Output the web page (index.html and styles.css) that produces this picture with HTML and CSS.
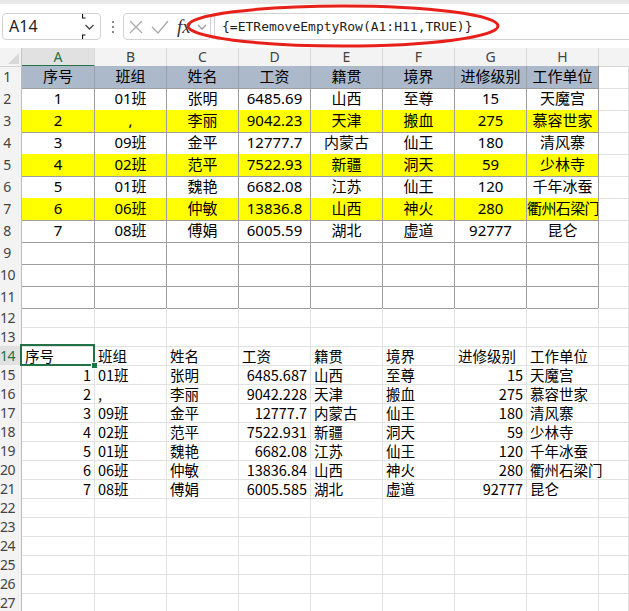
FILE: index.html
```html
<!DOCTYPE html>
<html lang="zh-CN">
<head>
<meta charset="utf-8">
<title>ETRemoveEmptyRow</title>
<link rel="stylesheet" href="styles.css">
</head>
<body>
<div class="topbar">
  <div class="namebox">
    <div class="nb-val">A14</div>
    <div class="nb-dd">
      <svg width="18" height="25" viewBox="0 0 18 25"><path d="M0.5 0v4h3M0.5 25v-4h3" fill="none" stroke="#111" stroke-width="1.2"/><path d="M3.5 11l4 4 4-4" fill="none" stroke="#444" stroke-width="1.3"/></svg>
    </div>
  </div>
  <div class="dots"><i></i><i></i><i></i></div>
  <div class="iconbox">
    <svg class="ic-x" width="14" height="14" viewBox="0 0 14 14"><path d="M1 1l12 12M13 1L1 13" stroke="#a9a9a9" stroke-width="1.3" fill="none"/></svg>
    <svg class="ic-ok" width="18" height="14" viewBox="0 0 18 14"><path d="M1 7l6 6L17 1" stroke="#a9a9a9" stroke-width="1.3" fill="none"/></svg>
    <span class="fx">fx</span>
    <svg class="ic-dd" width="10" height="8" viewBox="0 0 10 8"><path d="M1 2l4 4 4-4" stroke="#9a9a9a" stroke-width="1.3" fill="none"/></svg>
  </div>
  <div class="formula">{=ETRemoveEmptyRow(A1:H11,TRUE)}</div>
  <svg class="ring" width="330" height="52" viewBox="0 0 330 52"><ellipse cx="158" cy="26" rx="155" ry="20" fill="none" stroke="#e8201a" stroke-width="3"/></svg>
</div>

<div class="sheet">
  <div class="row colhdr">
    <div class="corner"></div>
    <div class="ch act">A</div><div class="ch">B</div><div class="ch">C</div><div class="ch">D</div><div class="ch">E</div><div class="ch">F</div><div class="ch">G</div><div class="ch">H</div><div class="ch last"></div>
  </div>

  <div class="row tall hd">
    <div class="rh">1</div>
    <div class="c d">序号</div><div class="c d">班组</div><div class="c d">姓名</div><div class="c d">工资</div><div class="c d">籍贯</div><div class="c d">境界</div><div class="c d">进修级别</div><div class="c d">工作单位</div><div class="c"></div>
  </div>
  <div class="row tall">
    <div class="rh">2</div>
    <div class="c d">1</div><div class="c d">01班</div><div class="c d">张明</div><div class="c d">6485.69</div><div class="c d">山西</div><div class="c d">至尊</div><div class="c d">15</div><div class="c d">天魔宫</div><div class="c"></div>
  </div>
  <div class="row tall yl">
    <div class="rh">3</div>
    <div class="c d">2</div><div class="c d">,</div><div class="c d">李丽</div><div class="c d">9042.23</div><div class="c d">天津</div><div class="c d">搬血</div><div class="c d">275</div><div class="c d">慕容世家</div><div class="c"></div>
  </div>
  <div class="row tall">
    <div class="rh">4</div>
    <div class="c d">3</div><div class="c d">09班</div><div class="c d">金平</div><div class="c d">12777.7</div><div class="c d">内蒙古</div><div class="c d">仙王</div><div class="c d">180</div><div class="c d">清风寨</div><div class="c"></div>
  </div>
  <div class="row tall yl">
    <div class="rh">5</div>
    <div class="c d">4</div><div class="c d">02班</div><div class="c d">范平</div><div class="c d">7522.93</div><div class="c d">新疆</div><div class="c d">洞天</div><div class="c d">59</div><div class="c d">少林寺</div><div class="c"></div>
  </div>
  <div class="row tall">
    <div class="rh">6</div>
    <div class="c d">5</div><div class="c d">01班</div><div class="c d">魏艳</div><div class="c d">6682.08</div><div class="c d">江苏</div><div class="c d">仙王</div><div class="c d">120</div><div class="c d">千年冰蚕</div><div class="c"></div>
  </div>
  <div class="row tall yl">
    <div class="rh">7</div>
    <div class="c d">6</div><div class="c d">06班</div><div class="c d">仲敏</div><div class="c d">13836.8</div><div class="c d">山西</div><div class="c d">神火</div><div class="c d">280</div><div class="c d fit">衢州石梁门</div><div class="c"></div>
  </div>
  <div class="row tall">
    <div class="rh">8</div>
    <div class="c d">7</div><div class="c d">08班</div><div class="c d">傅娟</div><div class="c d">6005.59</div><div class="c d">湖北</div><div class="c d">虚道</div><div class="c d">92777</div><div class="c d">昆仑</div><div class="c"></div>
  </div>
  <div class="row tall">
    <div class="rh">9</div>
    <div class="c d"></div><div class="c d"></div><div class="c d"></div><div class="c d"></div><div class="c d"></div><div class="c d"></div><div class="c d"></div><div class="c d"></div><div class="c"></div>
  </div>
  <div class="row tall">
    <div class="rh">10</div>
    <div class="c d"></div><div class="c d"></div><div class="c d"></div><div class="c d"></div><div class="c d"></div><div class="c d"></div><div class="c d"></div><div class="c d"></div><div class="c"></div>
  </div>
  <div class="row tall">
    <div class="rh">11</div>
    <div class="c d"></div><div class="c d"></div><div class="c d"></div><div class="c d"></div><div class="c d"></div><div class="c d"></div><div class="c d"></div><div class="c d"></div><div class="c"></div>
  </div>

  <div class="row short">
    <div class="rh">12</div>
    <div class="c"></div><div class="c"></div><div class="c"></div><div class="c"></div><div class="c"></div><div class="c"></div><div class="c"></div><div class="c"></div><div class="c"></div>
  </div>
  <div class="row short">
    <div class="rh">13</div>
    <div class="c"></div><div class="c"></div><div class="c"></div><div class="c"></div><div class="c"></div><div class="c"></div><div class="c"></div><div class="c"></div><div class="c"></div>
  </div>
  <div class="row short out">
    <div class="rh act">14</div>
    <div class="c sel">序号</div><div class="c">班组</div><div class="c">姓名</div><div class="c">工资</div><div class="c">籍贯</div><div class="c">境界</div><div class="c">进修级别</div><div class="c">工作单位</div><div class="c"></div>
  </div>
  <div class="row short out">
    <div class="rh">15</div>
    <div class="c n">1</div><div class="c">01班</div><div class="c">张明</div><div class="c n">6485.687</div><div class="c">山西</div><div class="c">至尊</div><div class="c n">15</div><div class="c">天魔宫</div><div class="c"></div>
  </div>
  <div class="row short out">
    <div class="rh">16</div>
    <div class="c n">2</div><div class="c">,</div><div class="c">李丽</div><div class="c n">9042.228</div><div class="c">天津</div><div class="c">搬血</div><div class="c n">275</div><div class="c">慕容世家</div><div class="c"></div>
  </div>
  <div class="row short out">
    <div class="rh">17</div>
    <div class="c n">3</div><div class="c">09班</div><div class="c">金平</div><div class="c n">12777.7</div><div class="c">内蒙古</div><div class="c">仙王</div><div class="c n">180</div><div class="c">清风寨</div><div class="c"></div>
  </div>
  <div class="row short out">
    <div class="rh">18</div>
    <div class="c n">4</div><div class="c">02班</div><div class="c">范平</div><div class="c n">7522.931</div><div class="c">新疆</div><div class="c">洞天</div><div class="c n">59</div><div class="c">少林寺</div><div class="c"></div>
  </div>
  <div class="row short out">
    <div class="rh">19</div>
    <div class="c n">5</div><div class="c">01班</div><div class="c">魏艳</div><div class="c n">6682.08</div><div class="c">江苏</div><div class="c">仙王</div><div class="c n">120</div><div class="c">千年冰蚕</div><div class="c"></div>
  </div>
  <div class="row short out">
    <div class="rh">20</div>
    <div class="c n">6</div><div class="c">06班</div><div class="c">仲敏</div><div class="c n">13836.84</div><div class="c">山西</div><div class="c">神火</div><div class="c n">280</div><div class="c">衢州石梁门</div><div class="c"></div>
  </div>
  <div class="row short out">
    <div class="rh">21</div>
    <div class="c n">7</div><div class="c">08班</div><div class="c">傅娟</div><div class="c n">6005.585</div><div class="c">湖北</div><div class="c">虚道</div><div class="c n">92777</div><div class="c">昆仑</div><div class="c"></div>
  </div>
  <div class="row short">
    <div class="rh">22</div>
    <div class="c"></div><div class="c"></div><div class="c"></div><div class="c"></div><div class="c"></div><div class="c"></div><div class="c"></div><div class="c"></div><div class="c"></div>
  </div>
  <div class="row short">
    <div class="rh">23</div>
    <div class="c"></div><div class="c"></div><div class="c"></div><div class="c"></div><div class="c"></div><div class="c"></div><div class="c"></div><div class="c"></div><div class="c"></div>
  </div>
  <div class="row short">
    <div class="rh">24</div>
    <div class="c"></div><div class="c"></div><div class="c"></div><div class="c"></div><div class="c"></div><div class="c"></div><div class="c"></div><div class="c"></div><div class="c"></div>
  </div>
  <div class="row short">
    <div class="rh">25</div>
    <div class="c"></div><div class="c"></div><div class="c"></div><div class="c"></div><div class="c"></div><div class="c"></div><div class="c"></div><div class="c"></div><div class="c"></div>
  </div>
  <div class="row short">
    <div class="rh">26</div>
    <div class="c"></div><div class="c"></div><div class="c"></div><div class="c"></div><div class="c"></div><div class="c"></div><div class="c"></div><div class="c"></div><div class="c"></div>
  </div>
  <div class="row short">
    <div class="rh">27</div>
    <div class="c"></div><div class="c"></div><div class="c"></div><div class="c"></div><div class="c"></div><div class="c"></div><div class="c"></div><div class="c"></div><div class="c"></div>
  </div>
</div>
</body>
</html>
```

FILE: styles.css
```css
html, body {
  margin: 0;
  padding: 0;
  background: #ffffff;
}
body {
  width: 629px;
  height: 611px;
  overflow: hidden;
  font-family: "Noto Sans CJK SC", "Noto Sans", sans-serif;
  color: #000;
}

/* ---------- formula bar ---------- */
.topbar {
  position: relative;
  height: 48px;
  box-sizing: border-box;
  border-top: 4px solid #e8e8e8;
  padding-top: 9px;
  display: flex;
  align-items: flex-start;
}
.namebox {
  margin-left: 2px;
  width: 99px;
  height: 27px;
  box-sizing: border-box;
  border: 1px solid #d2d2d2;
  border-radius: 4px;
  display: flex;
}
.nb-val {
  flex: 1;
  padding-left: 6px;
  font-family: "Noto Sans", sans-serif;
  font-size: 16px;
  line-height: 25px;
  color: #1e1e1e;
}
.nb-dd {
  width: 18px;
  height: 25px;
}
.nb-dd svg { display: block; }
.dots {
  width: 4px;
  margin-left: 10px;
  padding-top: 8px;
  display: flex;
  flex-direction: column;
  align-items: center;
  gap: 3px;
}
.dots i {
  display: block;
  width: 2px;
  height: 2px;
  background: #8a8a8a;
}
.iconbox {
  margin-left: 8px;
  width: 88px;
  height: 27px;
  box-sizing: border-box;
  border: 1px solid #d2d2d2;
  border-radius: 4px;
  display: flex;
  align-items: center;
  padding-left: 5px;
}
.ic-ok { margin-left: 8px; }
.fx {
  margin-left: 8px;
  font-family: "Liberation Serif", serif;
  font-style: italic;
  font-size: 19px;
  line-height: 25px;
  color: #333;
}
.ic-dd { margin-left: 6px; }
.formula {
  margin-left: 3px;
  flex: 1;
  height: 27px;
  box-sizing: border-box;
  border: 1px solid #d2d2d2;
  border-right: none;
  border-radius: 4px 0 0 4px;
  padding-left: 7px;
  font-family: "DejaVu Sans Mono", "Liberation Mono", monospace;
  font-size: 13px;
  line-height: 25px;
  color: #1e1e1e;
  white-space: nowrap;
}
.ring {
  position: absolute;
  left: 185px;
  top: -4px;
}

/* ---------- sheet ---------- */
.row {
  display: grid;
  grid-template-columns: 22px 73px repeat(7, 72px) 1fr;
}
.row > div {
  box-sizing: border-box;
  border-right: 1px solid #e1e1e1;
  border-bottom: 1px solid #e1e1e1;
  white-space: nowrap;
}
.colhdr { height: 18px; }
.tall { height: 22px; }
.short { height: 19px; }

.corner {
  background: #f3f3f3;
  position: relative;
  border-right: 1px solid #c6c6c6 !important;
  border-bottom: 1px solid #d4d4d4 !important;
}
.corner::after {
  content: "";
  position: absolute;
  right: 2px;
  bottom: 2px;
  width: 0;
  height: 0;
  border-left: 11px solid transparent;
  border-bottom: 11px solid #d9d9d9;
}
.ch {
  background: #f3f3f3;
  color: #444;
  font-family: "Noto Sans", sans-serif;
  font-size: 14px;
  line-height: 17px;
  text-align: center;
  border-right: 1px solid #d8d8d8 !important;
  border-bottom: 1px solid #d4d4d4 !important;
}
.ch.act {
  background: #e1e1e1;
  color: #217346;
  border-bottom: 2px solid #217346 !important;
}
.ch.last { border-right: none !important; }

.rh {
  background: #f3f3f3;
  color: #444;
  font-family: "Noto Sans", sans-serif;
  font-size: 14px;
  text-align: center;
  padding-right: 7px;
  border-right: 1px solid #bdbdbd !important;
  border-bottom: 1px solid #e2e2e2 !important;
  overflow: visible;
  letter-spacing: -0.5px;
}
.tall .rh { line-height: 22px; }
.short .rh { line-height: 19px; }
.rh.act {
  color: #217346;
  background: #e1e1e1;
}

.c {
  font-size: 15px;
  padding: 0 2px;
}
.tall .c { line-height: 21px; }
.short .c { line-height: 19px; font-size: 14.5px; }

.c.d {
  font-family: "Noto Sans", "Noto Sans CJK SC", sans-serif;
  border-right: 1px solid #9e9e9e;
  border-bottom: 1px solid #9e9e9e;
  text-align: center;
  overflow: hidden;
  padding: 0;
}
.c.d.fit { letter-spacing: -0.6px; }
.hd .c.d { background: #acb9ca; }
.yl .c.d { background: #ffff00; }

.out .c { padding-left: 3px; }
.out .c.n {
  text-align: right;
  padding-right: 3px;
  padding-left: 0;
}

.sel { position: relative; }
.sel::before {
  content: "";
  position: absolute;
  left: -2px;
  top: -2px;
  right: -1px;
  bottom: -1px;
  border: 2px solid #217346;
}
.sel::after {
  content: "";
  position: absolute;
  right: -4px;
  bottom: -4px;
  width: 5px;
  height: 5px;
  background: #217346;
  border: 1px solid #ffffff;
}
```
